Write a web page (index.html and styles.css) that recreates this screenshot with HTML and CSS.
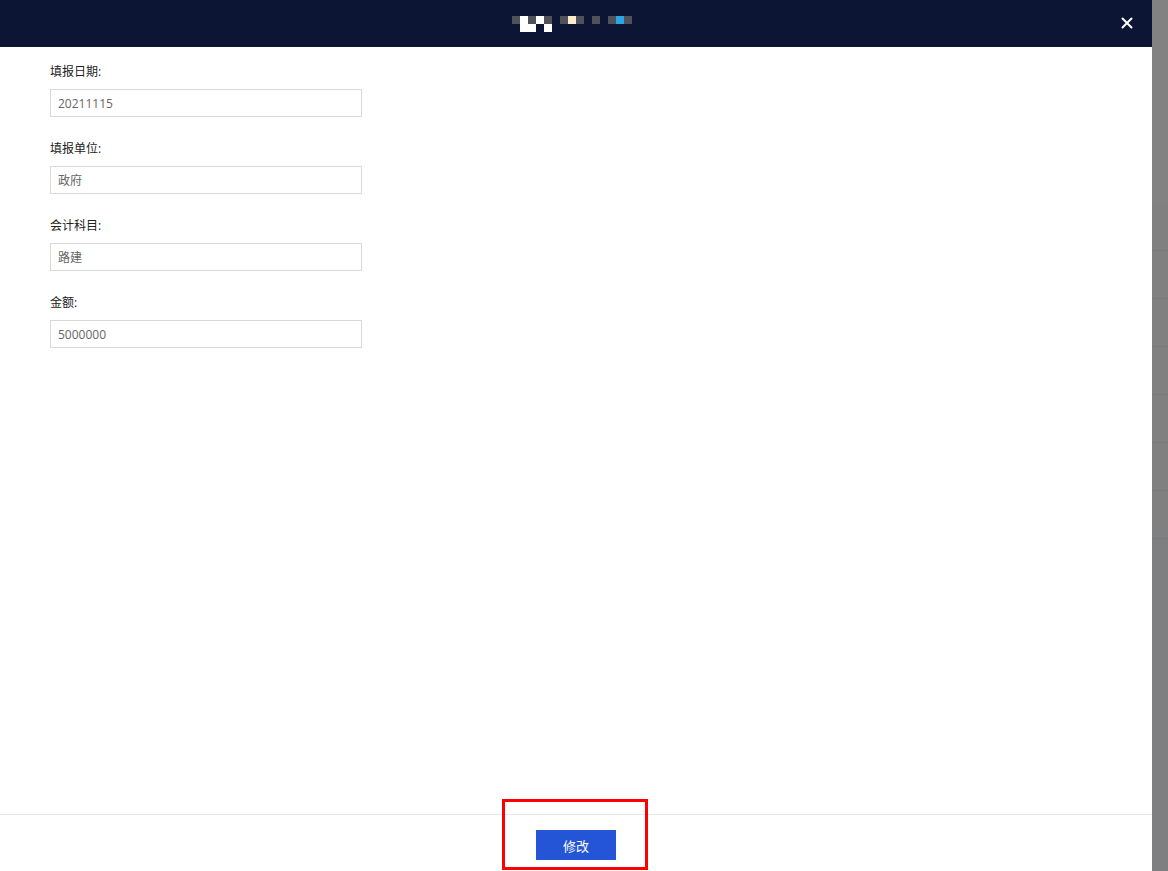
FILE: index.html
```html
<html>
    <head>
        <link rel="stylesheet" href="styles.css">
    </head>
    <body>
        <div class="page">
            <div class="modal">
                <div class="modal-header">
                    <div class="title-mosaic">
                        <div class="mosaic-row">
                            <span class="px gray"></span><span class="px white"></span><span class="px gray"></span><span class="px white"></span><span class="px gray"></span>
                            <span class="px gap"></span><span class="px gray"></span><span class="px cream"></span><span class="px gray"></span>
                            <span class="px gap"></span><span class="px gray"></span>
                            <span class="px gap"></span><span class="px gray"></span><span class="px blue"></span><span class="px gray"></span>
                        </div>
                        <div class="mosaic-row">
                            <span class="px gap"></span><span class="px white"></span><span class="px white"></span><span class="px gap"></span><span class="px white"></span>
                        </div>
                    </div>
                    <div class="close">
                        <svg width="12" height="12" viewBox="0 0 12 12">
                            <path d="M1.5 1.5 L10.5 10.5 M10.5 1.5 L1.5 10.5" stroke="#fff" stroke-width="2" stroke-linecap="round"/>
                        </svg>
                    </div>
                </div>
                <form class="modal-body">
                    <div class="field">
                        <label>填报日期:</label>
                        <input type="text" value="20211115"/>
                    </div>
                    <div class="field">
                        <label>填报单位:</label>
                        <input type="text" value="政府"/>
                    </div>
                    <div class="field">
                        <label>会计科目:</label>
                        <input type="text" value="路建"/>
                    </div>
                    <div class="field">
                        <label>金额:</label>
                        <input type="text" value="5000000"/>
                    </div>
                </form>
                <div class="modal-footer">
                    <button class="button-primary">修改</button>
                    <div class="highlight"></div>
                </div>
            </div>
            <div class="backdrop">
                <div class="backdrop-top"></div>
                <div class="backdrop-row"></div>
                <div class="backdrop-row"></div>
                <div class="backdrop-row"></div>
                <div class="backdrop-row"></div>
                <div class="backdrop-row"></div>
                <div class="backdrop-row"></div>
                <div class="backdrop-row"></div>
                <div class="backdrop-bottom"></div>
            </div>
        </div>
    </body>
</html>
```

FILE: styles.css
```css
body {
    margin: 0;
    font-family: "Open Sans", "Noto Sans CJK SC", sans-serif;
    font-size: 12px;
    color: #333;
}
.page {
    display: flex;
    width: 1168px;
    height: 871px;
    overflow: hidden;
}
.modal {
    width: 1152px;
    display: flex;
    flex-direction: column;
    background: #fff;
}
.modal-header {
    height: 47px;
    background: #0c1533;
    position: relative;
    display: flex;
    justify-content: center;
    align-items: flex-start;
}
.title-mosaic {
    margin-top: 16px;
    margin-right: 8px;
    display: flex;
    flex-direction: column;
}
.mosaic-row {
    display: flex;
}
.px {
    width: 8px;
    height: 8px;
}
.px.gap {
    background: transparent;
}
.px.gray {
    background: #50525a;
}
.px.white {
    background: #fff;
}
.px.cream {
    background: #fbeccb;
}
.px.blue {
    background: #2aa6e6;
}
.close {
    position: absolute;
    right: 19px;
    top: 17px;
    width: 12px;
    height: 12px;
    display: flex;
}
.modal-body {
    flex: 1;
    margin: 0;
    padding: 15px 50px 0;
    display: flex;
    flex-direction: column;
}
.field {
    display: flex;
    flex-direction: column;
    margin-bottom: 22px;
}
.field label {
    line-height: 20px;
    height: 20px;
    margin-bottom: 7px;
    color: #222;
}
.field input {
    width: 312px;
    height: 28px;
    box-sizing: border-box;
    border: 1px solid #d9d9d9;
    border-radius: 0;
    padding: 0 7px;
    font-family: "Open Sans", "Noto Sans CJK SC", sans-serif;
    font-size: 12px;
    color: #666;
    outline: none;
}
.modal-footer {
    height: 56px;
    border-top: 1px solid #e8e8e8;
    display: flex;
    justify-content: center;
    align-items: flex-start;
    position: relative;
}
.button-primary {
    margin-top: 15px;
    width: 80px;
    height: 30px;
    border: none;
    background: #2355d6;
    color: #fff;
    font-family: "Noto Sans CJK SC", sans-serif;
    font-size: 13px;
}
.highlight {
    position: absolute;
    left: 502px;
    top: -16px;
    width: 140px;
    height: 65px;
    border: 3px solid #ff0000;
}
.backdrop {
    width: 16px;
    display: flex;
    flex-direction: column;
    background: #808080;
}
.backdrop-top {
    height: 203px;
    background: #828282;
}
.backdrop-row {
    height: 47px;
    border-bottom: 1px solid #797979;
}
.backdrop-bottom {
    flex: 1;
    background: #7e7f80;
}
```
